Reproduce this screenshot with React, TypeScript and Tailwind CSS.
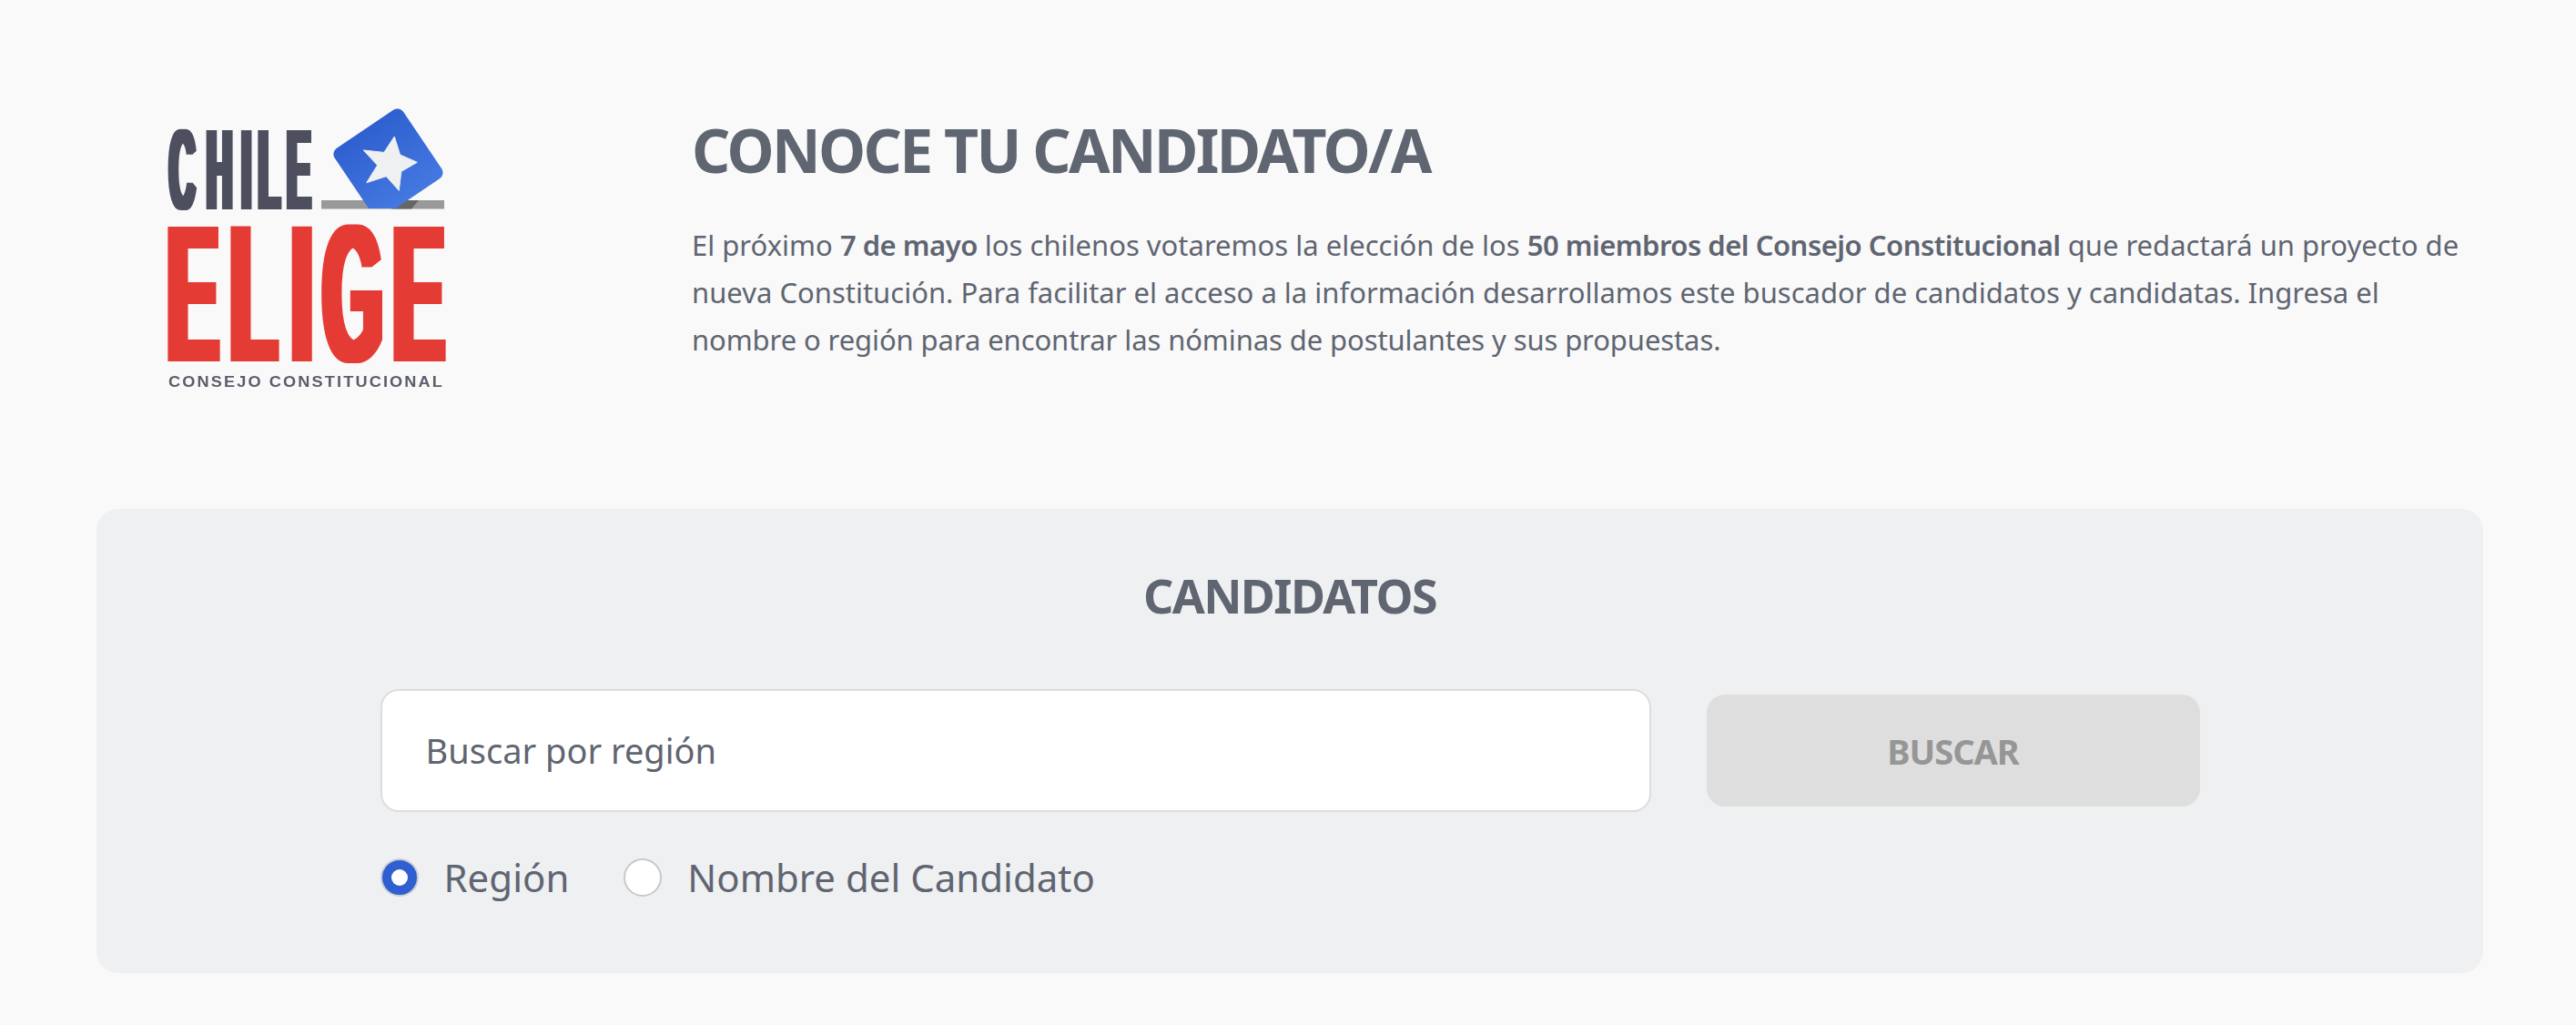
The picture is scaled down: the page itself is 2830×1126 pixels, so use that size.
const bodyFont = "font-['Noto_Sans','Open_Sans',sans-serif]";

function Logo() {
  return (
    <svg viewBox="0 0 380 360" className="h-[360px] w-[380px] shrink-0 blur-[0.7px]" aria-label="Chile Elige">
      <defs>
        <linearGradient id="ballot" x1="0" y1="0" x2="0" y2="1">
          <stop offset="0" stopColor="#2f60cf" />
          <stop offset="1" stopColor="#4478e0" />
        </linearGradient>
        <clipPath id="slot">
          <rect x="180" y="0" width="320" height="139" />
        </clipPath>
        <filter id="thickA" filterUnits="userSpaceOnUse" x="0" y="0" width="380" height="360">
          <feMorphology operator="dilate" radius="3 0" />
        </filter>
        <filter id="thickB" filterUnits="userSpaceOnUse" x="0" y="0" width="380" height="360">
          <feMorphology operator="dilate" radius="5 0" />
        </filter>
      </defs>
      <g filter="url(#thickA)">
        <text transform="scale(0.31 1)" x="116 248 372 431.5 533" y="140" fontFamily="Liberation Sans" fontWeight="700" fontSize="126" fill="#4d505e">CHILE</text>
      </g>
      <rect x="203" y="130" width="135" height="9.5" fill="#999" />
      <path d="M293 130 l17 0 l-8 9.5 l-22 0z" fill="#666" />
      <g clipPath="url(#slot)">
        <rect x="231" y="44" width="91" height="91" rx="8" fill="url(#ballot)" transform="rotate(-34 276.5 89.5)" />
      </g>
      <path
        d="M283.3 60 L289.5 80 L308.3 88.3 L290.8 98.4 L288.3 119.3 L274.3 103.7 L252.7 110.7 L264.6 91.5 L249.3 75 L271.9 77.4Z"
        fill="#eef0f2"
        stroke="#eef0f2"
        strokeLinejoin="round"
      />
      <g filter="url(#thickB)">
        <text transform="scale(0.39 1)" x="86.5 263.5 436 525 722.5" y="307.5" fontFamily="Liberation Sans" fontWeight="700" fontSize="216" fill="#e53b36">ELIGE</text>
      </g>
      <text x="35" y="335" fontFamily="Liberation Sans" fontWeight="700" fontSize="17" letterSpacing="2" fill="#5b5e6b" textLength="303" lengthAdjust="spacingAndGlyphs">CONSEJO CONSTITUCIONAL</text>
    </svg>
  );
}

function Radio({label, checked}: {label: string; checked?: boolean}) {
  return (
    <label className="flex items-center gap-[28px]">
      {checked ? (
        <span className="flex h-[42px] w-[42px] items-center justify-center rounded-full border-[2px] border-[#c9ccd6] bg-[#2f5fd0]">
          <span className="h-[18px] w-[18px] rounded-full bg-white" />
        </span>
      ) : (
        <span className="h-[42px] w-[42px] rounded-full border-[2px] border-[#c9c9c9] bg-white" />
      )}
      <span className="text-[42px] leading-[56px] text-[#5f6571]">{label}</span>
    </label>
  );
}

export default function App() {
  return (
    <div className={`h-[1126px] w-[2830px] overflow-hidden bg-[#f9f9f9] pl-[106px] pr-[102px] ${bodyFont}`}>
      <header className="flex h-[559px] items-start">
        <div className="mt-[90px] ml-[44px] w-[610px]">
          <Logo />
        </div>
        <div className="pt-[122px] text-[#5f6571]">
          <h1 className="text-[66px] leading-[84px] font-bold tracking-[-2.65px]">CONOCE TU CANDIDATO/A</h1>
          <p className="mt-[37px] text-[31px] leading-[52px] whitespace-nowrap">
            <span className="block">
              El próximo <strong className="font-semibold tracking-[-0.5px]">7 de mayo</strong> los chilenos votaremos la elección de los <strong className="font-semibold tracking-[-0.5px]">50 miembros del Consejo Constitucional</strong> que redactará un proyecto de
            </span>
            <span className="block">nueva Constitución. Para facilitar el acceso a la información desarrollamos este buscador de candidatos y candidatas. Ingresa el</span>
            <span className="block tracking-[-0.1px]">nombre o región para encontrar las nóminas de postulantes y sus propuestas.</span>
          </p>
        </div>
      </header>
      <main className="flex h-[510px] flex-col items-center rounded-[24px] bg-[#eff0f2] pt-[60px]">
        <h2 className="text-[52px] leading-[70px] font-bold tracking-[-1.6px] text-[#5f6571]">CANDIDATOS</h2>
        <div className="mt-[68px] w-[1999px]">
          <div className="flex items-center gap-[61px]">
            <div className="flex h-[135px] w-[1396px] items-center rounded-[20px] border-[2px] border-[#dcdde0] bg-white px-[48px] text-[38px] text-[#5f6571]">
              Buscar por región
            </div>
            <button className="h-[123px] w-[542px] rounded-[20px] bg-[#dedede] pt-[2px] text-[38px] font-bold tracking-[-1px] text-[#969696]">BUSCAR</button>
          </div>
          <div className="mt-[44px] flex items-center gap-[60px]">
            <Radio label="Región" checked />
            <Radio label="Nombre del Candidato" />
          </div>
        </div>
      </main>
    </div>
  );
}
